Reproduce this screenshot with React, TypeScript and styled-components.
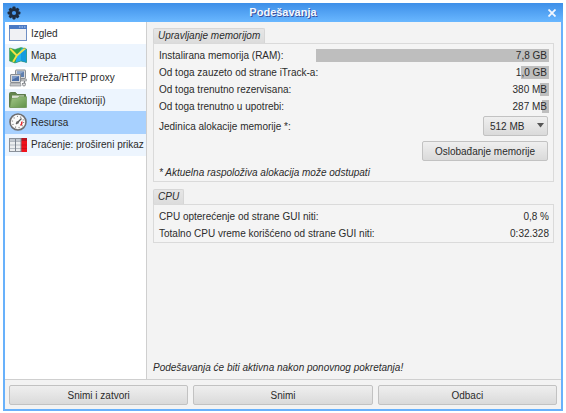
import React from "react";
import styled, { createGlobalStyle } from "styled-components";

const GlobalStyle = createGlobalStyle`
  *, *::before, *::after { box-sizing: border-box; }
  html, body, #root { height: 100%; }
  body {
    margin: 0;
    background: #fff;
    color: #2b2b2b;
    font: 10px/17px "Liberation Sans", Arial, sans-serif;
  }
  button, select { font: inherit; color: inherit; margin: 0; }
`;

const Desktop = styled.div`
  height: 100%;
  padding: 3px 3px 2px;
`;

const Window = styled.div`
  height: 100%;
  display: flex;
  flex-direction: column;
  border: 2px solid #68b1fb;
  border-top: 0;
  background: #f3f3f3;
`;

const TitleBar = styled.header`
  flex: none;
  height: 19px;
  margin: 0 -2px;
  padding: 0 4px;
  display: grid;
  grid-template-columns: 14px 1fr 14px;
  align-items: center;
  background: linear-gradient(#3d8fe8, #69b7ff);
`;

const Title = styled.h1`
  margin: 0;
  color: #f4f8ff;
  font-size: 11px;
  line-height: 19px;
  text-align: center;
  text-shadow: 1px 1px 0 #3a4f9c;
`;

const CloseButton = styled.button`
  width: 14px;
  height: 14px;
  padding: 0;
  border: 0;
  background: none;
  display: grid;
  place-items: center;
`;

const Body = styled.div`
  flex: 1;
  min-height: 0;
  display: flex;
`;

const Sidebar = styled.nav`
  flex: none;
  width: 142px;
  background: #fff;
  border-right: 1px solid #cfcfcf;
`;

const NavList = styled.div`
  height: 134px;
  display: grid;
  grid-auto-rows: 1fr;
`;

const NavItem = styled.button<{ $tint: string }>`
  padding: 0 0 0 4px;
  border: 0;
  display: flex;
  align-items: center;
  gap: 4px;
  white-space: nowrap;
  background: ${(p) => p.$tint};
`;

const Content = styled.main`
  flex: 1;
  min-width: 0;
  padding: 6px 7px 3px 6px;
  display: flex;
  flex-direction: column;
  gap: 7px;
`;

const GroupTitle = styled.h2`
  width: fit-content;
  margin: 0;
  padding: 0 4px;
  border: 1px solid #d6d6d6;
  border-bottom: 0;
  border-radius: 2px 2px 0 0;
  background: linear-gradient(#e6e6e6, #dcdcdc);
  font-size: 10px;
  font-weight: normal;
  font-style: italic;
  line-height: 14px;
`;

const Panel = styled.div`
  padding: 3px 4px 0 5px;
  border: 1px solid #dadada;
  background: #f4f4f4;
`;

const Readings = styled.dl`
  margin: 0;
`;

const Reading = styled.div`
  display: grid;
  grid-template-columns: 157px 1fr;
`;

const Term = styled.dt`
  white-space: nowrap;
`;

const Value = styled.dd`
  margin: 0;
  text-align: right;
`;

const CpuReading = styled.div`
  display: flex;
  justify-content: space-between;
`;

const UsageBar = styled.dd<{ $percent: number }>`
  height: 13px;
  margin: 2px 0;
  padding-right: 2px;
  line-height: 14px;
  text-align: right;
  background: linear-gradient(#bebebe, #bebebe) right / ${(p) => p.$percent}% 100% no-repeat;
`;

const FieldRow = styled.div`
  margin-top: 1px;
  padding-right: 1px;
  display: flex;
  justify-content: space-between;
  align-items: center;
`;

const raised = `
  height: 20px;
  border: 1px solid #c2c2c2;
  border-radius: 2px;
  background: linear-gradient(#efefef, #dadada);
`;

const SelectBox = styled.div`
  position: relative;
  width: 65px;
  height: 20px;

  svg {
    position: absolute;
    top: 7px;
    right: 4px;
    pointer-events: none;
  }
`;

const Select = styled.select`
  ${raised}
  width: 100%;
  padding: 0 16px 0 6px;
  appearance: none;
`;

const Button = styled.button`
  ${raised}
  padding: 0 12px;
  line-height: 17px;
`;

const ActionRow = styled.div`
  margin-top: 5px;
  padding-right: 1px;
  display: flex;
  justify-content: flex-end;
`;

const Note = styled.p`
  margin: 3px 0 0;
  font-style: italic;
`;

const RestartNote = styled.p`
  margin: auto 0 0;
  font-style: italic;
`;

const Footer = styled.footer`
  flex: none;
  padding: 5px 4px 4px;
  display: grid;
  grid-template-columns: repeat(3, 1fr);
  gap: 5px;
  border-top: 1px solid #cfcfcf;
`;

const GearIcon = () => (
  <svg width="14" height="14" viewBox="0 0 14 14" aria-hidden="true">
    <g fill="#1f2d40">
      {[0, 45, 90, 135].map((a) => (
        <rect key={a} x="5.4" y="0.6" width="3.2" height="12.8" rx="0.8" transform={`rotate(${a} 7 7)`} />
      ))}
      <circle cx="7" cy="7" r="4.8" />
    </g>
    <circle cx="7" cy="7" r="2.1" fill="#4a9aef" />
  </svg>
);

const WindowIcon = () => (
  <svg width="18" height="18" viewBox="0 0 18 18" aria-hidden="true">
    <rect x="0.5" y="1.5" width="17" height="15" fill="#f0f1f4" stroke="#6f8fc4" />
    <rect x="0" y="1" width="18" height="4" fill="#4a79c4" />
    <path d="M10 3h1.5M12.5 3H14M15 3h1.5" stroke="#b9d0f2" />
  </svg>
);

const MapIcon = () => (
  <svg width="18" height="18" viewBox="0 0 18 18" aria-hidden="true">
    <path d="M0.5 2 6 3.5 12 1.500l5.500 1.500v13.500L12 15l-6 2L0.500 15z" fill="#2fa84a" />
    <path d="M13 1.700 17.500 3v13.500L12 15l-5.500 1.800L8 10z" fill="#22b0ee" />
    <path d="M12 6.500 17.500 3v13.500L12 15z" fill="#149be0" />
    <path d="M1 2.500 7.800 9.500M16.500 2 7.800 9.500 4 16" stroke="#f2e046" strokeWidth="1.900" fill="none" />
    <path d="M0.500 2 6 3.500 12 1.500l5.500 1.500v13.500L12 15l-6 2L0.500 15z" fill="none" stroke="#2f8a62" strokeWidth="0.500" />
  </svg>
);

const NetworkIcon = () => (
  <svg width="18" height="18" viewBox="0 0 18 18" aria-hidden="true">
    <rect x="6.500" y="1" width="10" height="8.500" rx="0.500" fill="#d6d8da" stroke="#8a8e92" />
    <rect x="8" y="2.500" width="7" height="5.500" fill="#5f7fae" />
    <path d="M8 2.500h7L8 7z" fill="#8ea8cc" />
    <path d="M12 10h5.500v2H12z" fill="#c3c5c7" stroke="#8a8e92" strokeWidth="0.600" />
    <rect x="1.500" y="5.500" width="10" height="8" rx="0.500" fill="#d6d8da" stroke="#8a8e92" />
    <rect x="3" y="7" width="7" height="5" fill="#4c6fa8" />
    <path d="M3 7h7l-7 4z" fill="#7f9bc6" />
    <path d="M1.500 14h10l0.500 3H1z" fill="#c6c8ca" stroke="#8a8e92" strokeWidth="0.700" />
    <path d="M15.500 12v4M13 14.500h3.500" fill="none" stroke="#7d8186" strokeWidth="1.200" />
    <circle cx="15" cy="15.500" r="1.500" fill="#ddd" stroke="#7d8186" strokeWidth="0.800" />
  </svg>
);

const FolderIcon = () => (
  <svg width="18" height="18" viewBox="0 0 18 18" aria-hidden="true">
    <defs>
      <linearGradient id="folder" x1="0" y1="0" x2="1" y2="1">
        <stop offset="0" stopColor="#a5c98a" />
        <stop offset="1" stopColor="#5f9148" />
      </linearGradient>
    </defs>
    <path d="M0.500 16V2.500q0-1 1-1h5l1.500 2h8.500V16z" fill="#64854e" stroke="#5c7a4a" />
    <path d="M3 4.500h12v4H3z" fill="#dde3d5" />
    <path d="M0.800 16.500 2.500 7.500l6-0.300 1.500-1.500h7.500v10.800z" fill="url(#folder)" stroke="#6b9453" strokeWidth="0.700" />
  </svg>
);

const GaugeIcon = () => (
  <svg width="18" height="18" viewBox="0 0 18 18" aria-hidden="true">
    <circle cx="9" cy="9" r="8" fill="#fafafa" stroke="#6d6d70" strokeWidth="1.600" />
    <circle cx="9" cy="9" r="5.600" fill="none" stroke="#777" strokeWidth="1.200" strokeDasharray="0.900 2.620" />
    <path d="M12.800 8.500a4 4 0 0 1-1.300 4" fill="none" stroke="#e3242b" strokeWidth="1.500" />
    <path d="M7 11 12.500 5.500" stroke="#555" strokeWidth="1.200" />
    <circle cx="8.500" cy="9.500" r="1.300" fill="#666" />
  </svg>
);

const TableIcon = () => (
  <svg width="18" height="18" viewBox="0 0 18 18" aria-hidden="true">
    <rect x="0.500" y="2.500" width="17" height="13" fill="#eceef0" stroke="#8b929b" />
    <path d="M1 3h11v2.500H1z" fill="#c3c9d0" />
    <path d="M12 2h6v14h-6z" fill="#f0121c" />
    <path d="M12 2h6v3h-6z" fill="#b81520" />
    <path d="M1 5.500h11M1 9h11M1 12.500h11" stroke="#a9b0b9" strokeWidth="0.800" />
    <path d="M6.500 3v12M12 2v14" stroke="#7d8590" />
    <path d="M12.500 9H18M12.500 12.500H18" stroke="#c00f1a" strokeWidth="0.700" />
  </svg>
);

const sections = [
  { label: "Izgled", Icon: WindowIcon },
  { label: "Mapa", Icon: MapIcon },
  { label: "Mreža/HTTP proxy", Icon: NetworkIcon },
  { label: "Mape (direktoriji)", Icon: FolderIcon },
  { label: "Resursa", Icon: GaugeIcon },
  { label: "Praćenje: prošireni prikaz", Icon: TableIcon },
];

const memory = [
  { label: "Instalirana memorija (RAM):", value: "7,8 GB", percent: 100 },
  { label: "Od toga zauzeto od strane iTrack-a:", value: "1,0 GB", percent: 12 },
  { label: "Od toga trenutno rezervisana:", value: "380 MB", percent: 4 },
  { label: "Od toga trenutno u upotrebi:", value: "287 MB", percent: 3 },
];

const cpu = [
  { label: "CPU opterećenje od strane GUI niti:", value: "0,8 %" },
  { label: "Totalno CPU vreme korišćeno od strane GUI niti:", value: "0:32.328" },
];

export default function App() {
  const [active, setActive] = React.useState("Resursa");

  return (
    <>
      <GlobalStyle />
      <Desktop>
        <Window>
          <TitleBar>
            <GearIcon />
            <Title>Podešavanja</Title>
            <CloseButton type="button" aria-label="Zatvori">
              <svg width="8" height="8" viewBox="0 0 8 8" aria-hidden="true">
                <path d="M0.500 0.500l7 7M7.500 0.500l-7 7" stroke="#f2f7ff" strokeWidth="1.800" />
              </svg>
            </CloseButton>
          </TitleBar>
          <Body>
            <Sidebar>
              <NavList>
                {sections.map(({ label, Icon }, i) => (
                  <NavItem
                    key={label}
                    type="button"
                    aria-current={label === active ? "page" : undefined}
                    $tint={label === active ? "#a8d1ff" : i % 2 ? "#edf5fe" : "#fff"}
                    onClick={() => setActive(label)}
                  >
                    <Icon />
                    {label}
                  </NavItem>
                ))}
              </NavList>
            </Sidebar>
            <Content>
              <section>
                <GroupTitle>Upravljanje memorijom</GroupTitle>
                <Panel>
                  <Readings>
                    {memory.map((m) => (
                      <Reading key={m.label}>
                        <Term>{m.label}</Term>
                        <UsageBar $percent={m.percent}>{m.value}</UsageBar>
                      </Reading>
                    ))}
                  </Readings>
                  <FieldRow>
                    <label htmlFor="unit">Jedinica alokacije memorije *:</label>
                    <SelectBox>
                      <Select id="unit" defaultValue="512 MB">
                        <option>256 MB</option>
                        <option>512 MB</option>
                        <option>1024 MB</option>
                      </Select>
                      <svg width="7" height="5" viewBox="0 0 7 5" aria-hidden="true">
                        <path d="M0 0h7L3.500 4.500z" fill="#555" />
                      </svg>
                    </SelectBox>
                  </FieldRow>
                  <ActionRow>
                    <Button type="button">Oslobađanje memorije</Button>
                  </ActionRow>
                  <Note>* Aktuelna raspoloživa alokacija može odstupati</Note>
                </Panel>
              </section>
              <section>
                <GroupTitle>CPU</GroupTitle>
                <Panel>
                  <Readings>
                    {cpu.map((c) => (
                      <CpuReading key={c.label}>
                        <Term>{c.label}</Term>
                        <Value>{c.value}</Value>
                      </CpuReading>
                    ))}
                  </Readings>
                </Panel>
              </section>
              <RestartNote>Podešavanja će biti aktivna nakon ponovnog pokretanja!</RestartNote>
            </Content>
          </Body>
          <Footer>
            <Button type="button">Snimi i zatvori</Button>
            <Button type="button">Snimi</Button>
            <Button type="button">Odbaci</Button>
          </Footer>
        </Window>
      </Desktop>
    </>
  );
}
